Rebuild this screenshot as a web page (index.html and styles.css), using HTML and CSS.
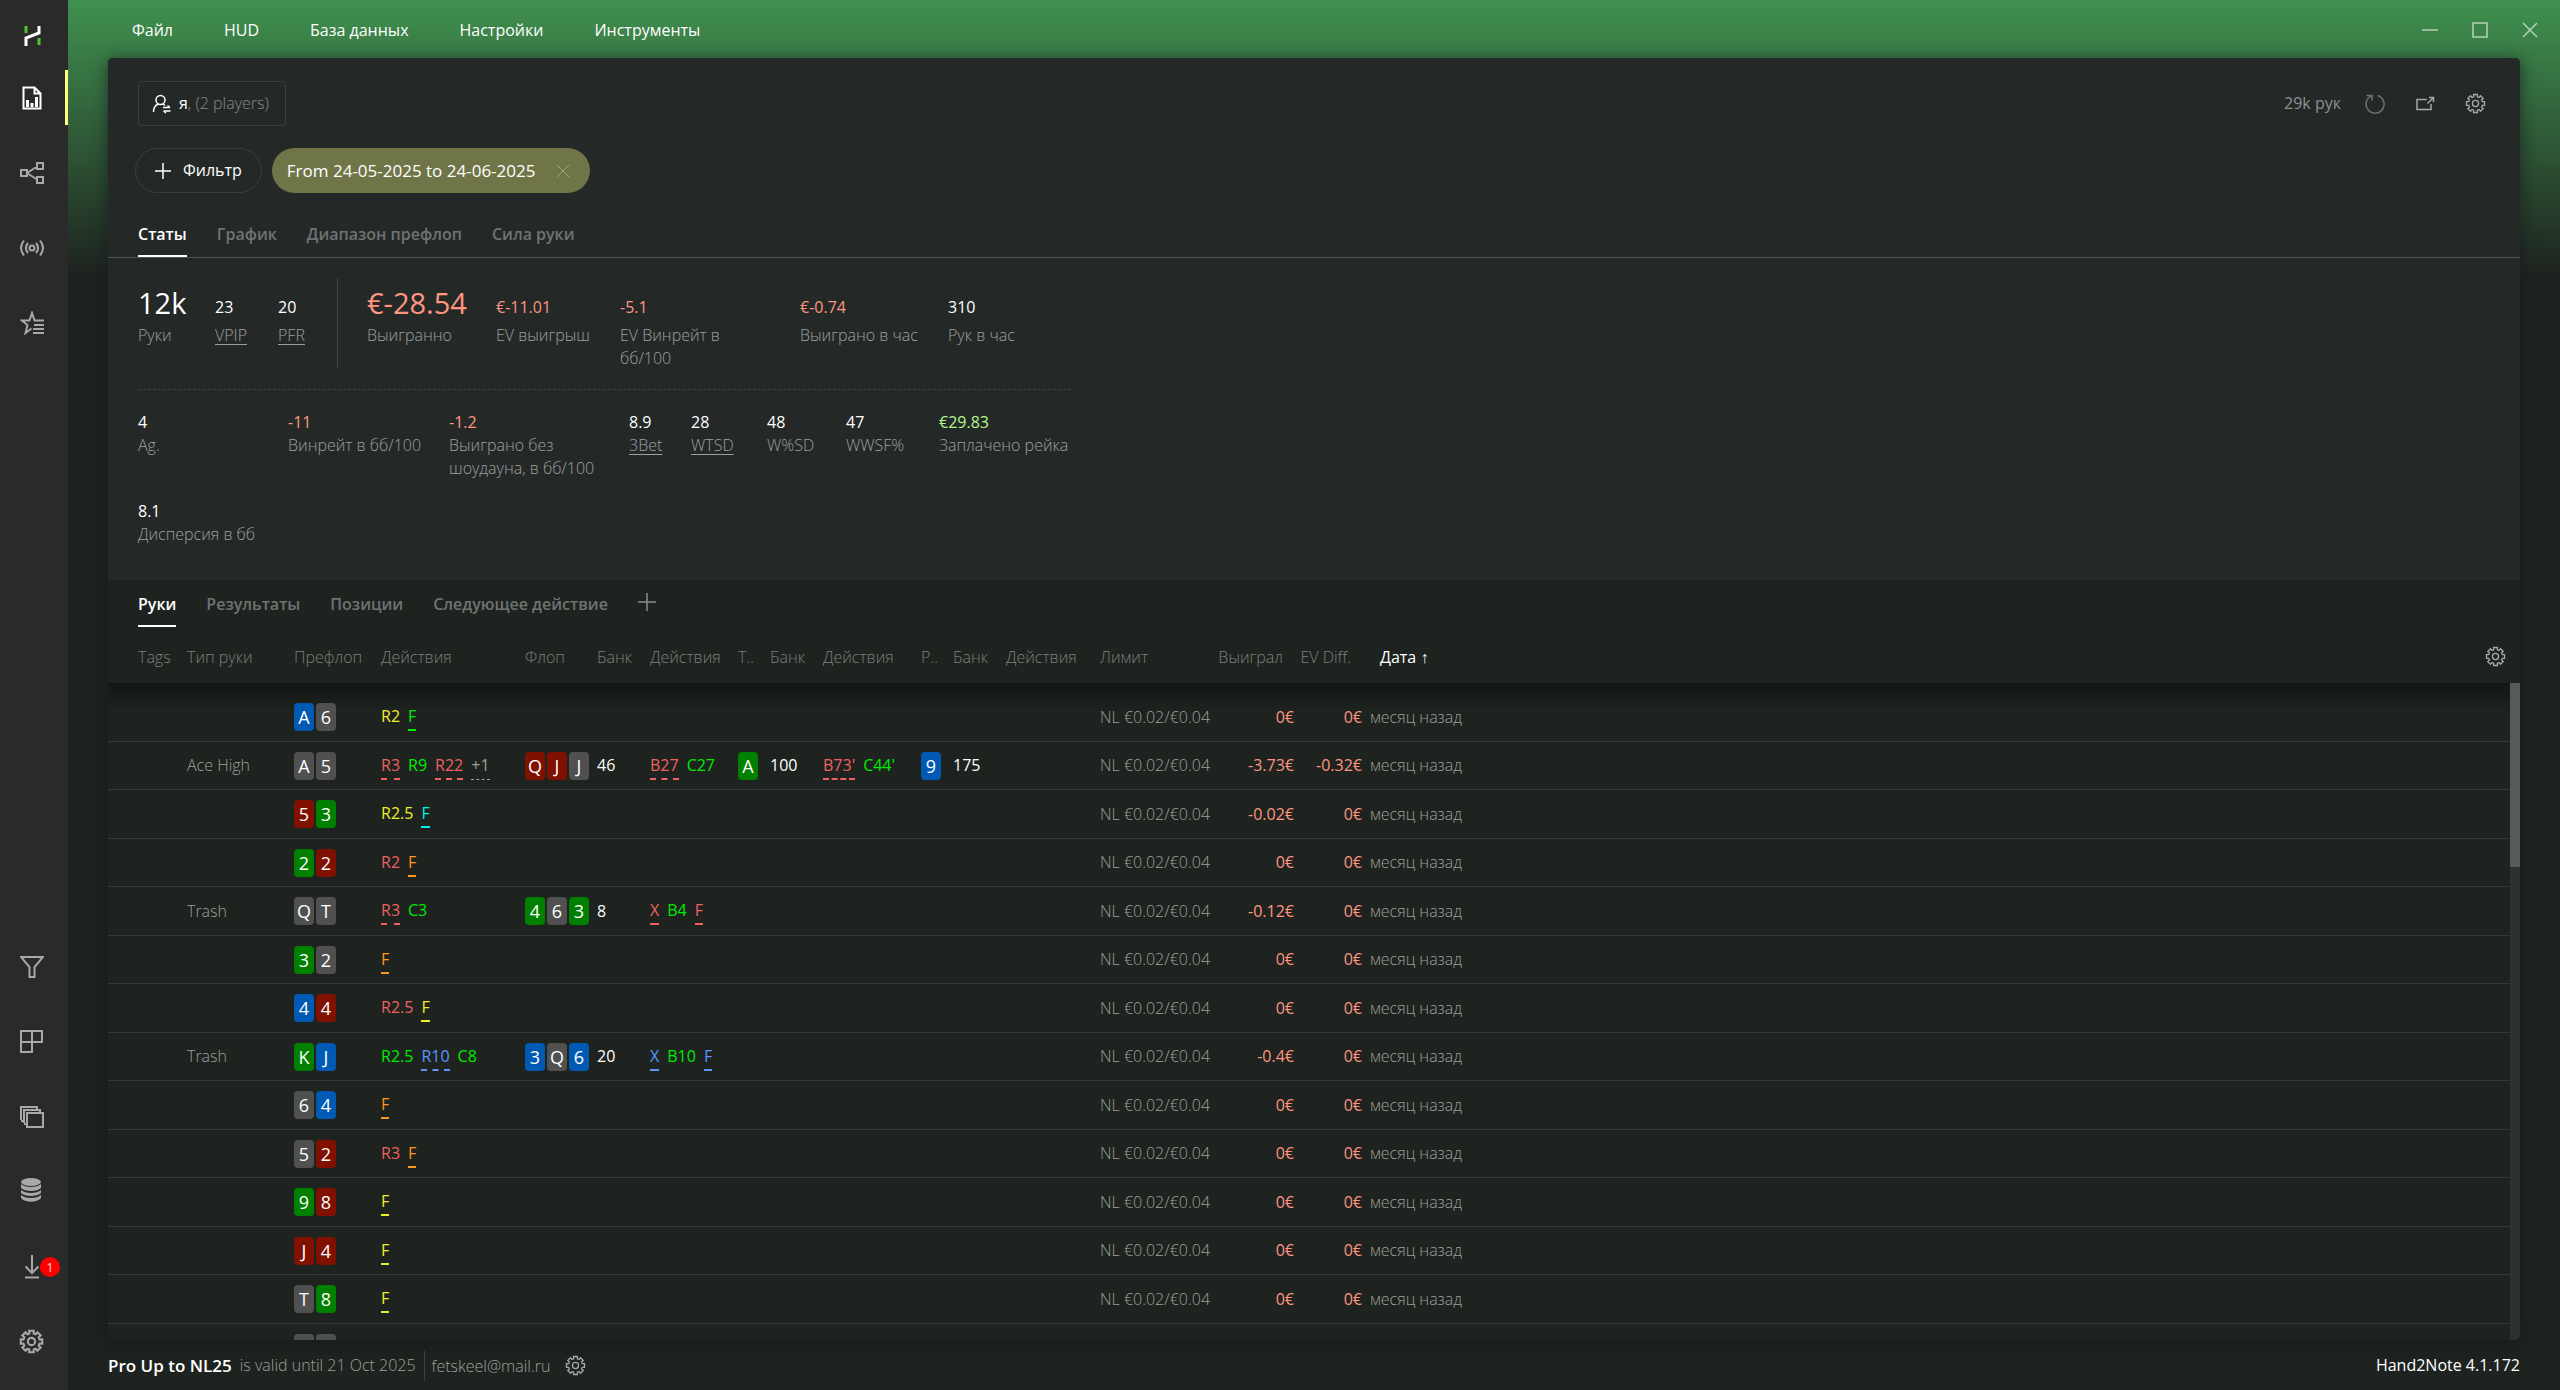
FILE: index.html
```html
<!DOCTYPE html>
<html lang="ru">
<head>
    <meta charset="UTF-8">
    <meta name="viewport" content="width=device-width, initial-scale=1.0">
    <title>Hand2Note</title>
    <link rel="stylesheet" href="styles.css">
</head>
<body>
    <svg class="sprite" aria-hidden="true">
        <symbol id="gear" viewBox="0 0 24 24">
            <path d="M9.800 1.700L14.200 1.700 14.100 4.300 16 5.100 17.700 3.200 20.800 6.300 18.900 8 19.700 9.900 22.300 9.800 22.300 14.200 19.700 14.100 18.900 16 20.800 17.700 17.700 20.800 16 18.900 14.100 19.700 14.200 22.300 9.800 22.300 9.900 19.700 8 18.900 6.300 20.800 3.200 17.700 5.100 16 4.300 14.100 1.700 14.200 1.700 9.800 4.300 9.900 5.100 8 3.200 6.300 6.300 3.200 8 5.100 9.900 4.300z"/>
            <circle cx="12" cy="12" r="3.500"/>
        </symbol>
    </svg>

    <nav class="sidebar">
        <div class="logo">
            <svg width="18" height="20" viewBox="0 0 18 20"><path class="logo-white" d="M16 0v7L3 12v8"/><path class="logo-green" d="M3 0v7M16 12v7"/></svg>
        </div>
        <button class="nav-btn active" aria-label="Отчёты">
            <svg width="20" height="24" viewBox="0 0 20 24"><path d="M1.500 1.500h11l6 6v15h-17z"/><path d="M12.500 1.500v6h6"/><path d="M5.500 21v-7M10 21v-4M14.500 21V11" stroke-width="3"/></svg>
        </button>
        <button class="nav-btn" aria-label="Дерево">
            <svg width="24" height="24" viewBox="0 0 24 24"><path d="M1 9h6v6H1zM17 2h6v6h-6zM17 16h6v6h-6zM7 12l10-6.500M7 12l10 6.500"/></svg>
        </button>
        <button class="nav-btn" aria-label="Live">
            <svg width="24" height="24" viewBox="0 0 24 24"><circle cx="12" cy="12" r="2.500"/><path d="M4 4.500c-4 5-4 10 0 15M8 7c-2.500 3-2.500 7 0 10M16 7c2.500 3 2.500 7 0 10M20 4.500c4 5 4 10 0 15"/></svg>
        </button>
        <button class="nav-btn" aria-label="Избранное">
            <svg width="24" height="24" viewBox="0 0 24 24"><path d="M24 9.500h-9.500L12 2 9.500 9.500H2L7.500 14l-2 8 6-4.500M14 14h10M13 18h11M13 22h11"/></svg>
        </button>
        <button class="nav-btn bottom" aria-label="Фильтры">
            <svg width="24" height="24" viewBox="0 0 24 24"><path d="M1 2h22l-8.500 10v10h-5V12z"/></svg>
        </button>
        <button class="nav-btn" aria-label="Панели">
            <svg width="24" height="24" viewBox="0 0 24 24"><path d="M1 1h21v11H12v10H1zM12 1v11M1 12h11"/></svg>
        </button>
        <button class="nav-btn" aria-label="Окна">
            <svg width="24" height="24" viewBox="0 0 24 24"><path d="M7 8h16v14H7zM4 18V5h16v3M7 19H4M1 15V2h16v3M4 16H1"/></svg>
        </button>
        <button class="nav-btn" aria-label="База">
            <svg class="solid" width="24" height="30" viewBox="0 0 24 30"><ellipse cx="11" cy="5" rx="10" ry="4"/><path d="M1 7c4 4 16 4 20 0v4c-4 4-16 4-20 0zM1 13c4 4 16 4 20 0v3c-4 4-16 4-20 0zM1 18c4 4 16 4 20 0v3c-4 5-16 5-20 0z"/></svg>
        </button>
        <button class="nav-btn" aria-label="Обновления">
            <svg width="24" height="24" viewBox="0 0 24 24"><path d="M12 0v18M5.500 11.500L12 18l6.500-6.500M5 22.500h14"/></svg>
            <span class="badge">1</span>
        </button>
        <button class="nav-btn" aria-label="Параметры">
            <svg width="25" height="25"><use href="#gear"/></svg>
        </button>
    </nav>

    <div class="window">
        <header class="titlebar">
            <button>Файл</button>
            <button>HUD</button>
            <button>База данных</button>
            <button>Настройки</button>
            <button>Инструменты</button>
            <div class="win-controls">
                <button aria-label="Свернуть"><svg width="16" height="16"><path d="M0 8h16"/></svg></button>
                <button aria-label="Развернуть"><svg width="16" height="16"><path d="M1 1h14v14H1z"/></svg></button>
                <button aria-label="Закрыть"><svg width="16" height="16"><path d="M1 1l14 14M15 1L1 15"/></svg></button>
            </div>
        </header>

        <main class="panel">
            <section class="report">
                <div class="top-row">
                    <button class="player">
                        <svg width="20" height="20" viewBox="0 0 20 20"><circle cx="8.500" cy="6" r="4.500"/><path d="M1.500 18c0-4 1.500-6.500 4.500-8M11 10l2 1.500M11 13.500h7M15.500 11.500l2.500 2M18.500 17h-7M14 19l-2.500-2"/></svg>
                        <span>я<span class="muted">, (2 players)</span></span>
                    </button>
                    <div class="top-tools">
                        <span>29k рук</span>
                        <button class="dim" aria-label="Обновить"><svg width="20" height="20" viewBox="0 0 20 20"><path d="M12.500 1.500a9 9 0 1 1-6 .4M1.500 1.500h5.500v5"/></svg></button>
                        <button aria-label="Открыть"><svg width="20" height="20" viewBox="0 0 20 20"><path d="M12 5.500H2v10h14V10"/><path d="M12.500 9.500L18 4M14 3.500h4.500V8"/></svg></button>
                        <button aria-label="Настройки отчёта"><svg width="21" height="21"><use href="#gear"/></svg></button>
                    </div>
                </div>
                <div class="filters">
                    <button class="add-filter"><svg width="16" height="16"><path d="M8 0v16M0 8h16"/></svg>Фильтр</button>
                    <button class="chip">From 24-05-2025 to 24-06-2025 <svg width="14" height="14"><path d="M1 1l12 12M13 1L1 13"/></svg></button>
                </div>
                <div class="tabs">
                    <button class="tab active">Статы</button>
                    <button class="tab">График</button>
                    <button class="tab">Диапазон префлоп</button>
                    <button class="tab">Сила руки</button>
                </div>

                <div class="stats">
                    <dl class="stat-row main-stats">
                        <div class="big"><dt>Руки</dt><dd>12k</dd></div>
                        <div><dt><a href="#">VPIP</a></dt><dd>23</dd></div>
                        <div><dt><a href="#">PFR</a></dt><dd>20</dd></div>
                        <div class="big split"><dt>Выигранно</dt><dd class="neg">€-28.54</dd></div>
                        <div><dt>EV выигрыш</dt><dd class="neg">€-11.01</dd></div>
                        <div><dt>EV Винрейт в<br>бб/100</dt><dd class="neg">-5.1</dd></div>
                        <div><dt>Выиграно в час</dt><dd class="neg">€-0.74</dd></div>
                        <div><dt>Рук в час</dt><dd>310</dd></div>
                    </dl>
                    <dl class="stat-row more-stats">
                        <div><dt>Ag.</dt><dd>4</dd></div>
                        <div><dt>Винрейт в бб/100</dt><dd class="neg">-11</dd></div>
                        <div><dt>Выиграно без<br>шоудауна, в бб/100</dt><dd class="neg">-1.2</dd></div>
                        <div><dt><a href="#">3Bet</a></dt><dd>8.9</dd></div>
                        <div><dt><a href="#">WTSD</a></dt><dd>28</dd></div>
                        <div><dt>W%SD</dt><dd>48</dd></div>
                        <div><dt>WWSF%</dt><dd>47</dd></div>
                        <div><dt>Заплачено рейка</dt><dd class="pos">€29.83</dd></div>
                        <div><dt>Дисперсия в бб</dt><dd>8.1</dd></div>
                    </dl>
                </div>
            </section>

            <section class="hands">
                <div class="tabs">
                    <button class="tab active">Руки</button>
                    <button class="tab">Результаты</button>
                    <button class="tab">Позиции</button>
                    <button class="tab">Следующее действие</button>
                    <button class="add-tab" aria-label="Добавить вкладку"><svg width="18" height="18"><path d="M9 0v18M0 9h18"/></svg></button>
                </div>
                <div class="table-area">
                    <table>
                        <colgroup>
                            <col class="c-tags"><col class="c-type"><col class="c-pre"><col class="c-act0">
                            <col class="c-flop"><col class="c-bank"><col class="c-act1">
                            <col class="c-card"><col class="c-bank"><col class="c-act2">
                            <col class="c-card"><col class="c-bank"><col class="c-act3">
                            <col class="c-limit"><col class="c-won"><col class="c-ev"><col>
                        </colgroup>
                        <thead>
                            <tr>
                                <th>Tags</th><th>Тип руки</th><th>Префлоп</th><th>Действия</th>
                                <th>Флоп</th><th>Банк</th><th>Действия</th>
                                <th>Т..</th><th>Банк</th><th>Действия</th>
                                <th>Р..</th><th>Банк</th><th>Действия</th>
                                <th>Лимит</th><th class="num">Выиграл</th><th class="num">EV Diff.</th>
                                <th class="sorted">
                                    <div class="date-head">Дата ↑
                                        <button aria-label="Настройки таблицы"><svg width="21" height="21"><use href="#gear"/></svg></button>
                                    </div>
                                </th>
                            </tr>
                        </thead>
                        <tbody id="hands"></tbody>
                    </table>
                    <div class="scrollbar"><div class="thumb"></div></div>
                </div>
            </section>
        </main>

        <footer class="statusbar">
            <b>Pro Up to NL25</b>
            <span class="valid">is valid until 21 Oct 2025</span>
            <span class="mail">fetskeel@mail.ru</span>
            <button aria-label="Аккаунт"><svg width="21" height="21"><use href="#gear"/></svg></button>
            <span class="version">Hand2Note 4.1.172</span>
        </footer>
    </div>

    <script src="script.js"></script>
</body>
</html>
```
FILE: styles.css
```css
* {
    box-sizing: border-box;
}

body {
    margin: 0;
    height: 100vh;
    display: flex;
    overflow: hidden;
    background: #1e231f linear-gradient(#40914f, #1e231f 275px) no-repeat;
    font-family: "Open Sans", "Noto Sans", sans-serif;
    font-size: 16px;
    line-height: 23px;
    color: #fff;
}

button {
    font: inherit;
    color: inherit;
    background: none;
    border: none;
    padding: 0;
    cursor: pointer;
}

svg {
    display: block;
    fill: none;
    stroke: currentColor;
    stroke-width: 1.5;
}

.sprite {
    position: absolute;
    width: 0;
    height: 0;
}

/* sidebar */
.sidebar {
    width: 68px;
    flex: none;
    display: flex;
    flex-direction: column;
    padding-bottom: 11px;
    background: #2a2a2a;
    color: #a8a8a8;
}

.logo {
    height: 60px;
    padding: 26px 4px 0 0;
    display: flex;
    justify-content: center;
}

.logo svg {
    stroke-width: 3;
}

.logo-white {
    stroke: #fff;
}

.logo-green {
    stroke: #4fc32b;
}

.nav-btn {
    position: relative;
    height: 75px;
    padding-right: 5px;
    display: flex;
    align-items: center;
    justify-content: center;
}

.nav-btn svg {
    stroke-width: 2;
}

.nav-btn.active {
    color: #fff;
}

.nav-btn.active::after {
    content: "";
    position: absolute;
    right: 0;
    top: 10px;
    width: 3px;
    height: 55px;
    background: #ffff80;
}

.nav-btn.bottom {
    margin-top: auto;
}

.nav-btn .solid {
    fill: currentColor;
    stroke: none;
}

.badge {
    position: absolute;
    left: 40px;
    top: 28px;
    width: 20px;
    height: 20px;
    border-radius: 50%;
    background: #f00;
    color: #fcc;
    font-size: 13px;
    line-height: 20px;
}

/* window */
.window {
    flex: 1;
    min-width: 0;
    display: flex;
    flex-direction: column;
}

.titlebar {
    height: 58px;
    flex: none;
    display: flex;
    align-items: center;
    gap: 51px;
    padding: 2px 22px 0 64px;
}

.win-controls {
    display: flex;
    gap: 34px;
    margin-left: auto;
    color: #b4d2ba;
}

.panel {
    flex: 1;
    min-height: 0;
    margin: 0 40px;
    display: flex;
    flex-direction: column;
    overflow: hidden;
    border-radius: 5px;
    background: #1e231f;
    box-shadow: 0 2px 16px rgba(20, 24, 32, 0.7);
}

.report {
    height: 522px;
    flex: none;
    padding-top: 23px;
    background: #242928;
}

.top-row,
.filters {
    display: flex;
    align-items: center;
    padding: 0 30px;
}

.player {
    display: flex;
    align-items: center;
    gap: 7px;
    height: 45px;
    padding: 0 16px 0 13px;
    border: 1px solid #3b403f;
    border-radius: 4px;
}

.muted {
    color: #858988;
    font-weight: 300;
}

.top-tools {
    display: flex;
    align-items: center;
    gap: 30px;
    margin-left: auto;
    padding-right: 4px;
    color: #a5a8a7;
}

.top-tools span {
    margin-right: -6px;
    color: #8d908f;
}

.top-tools .dim {
    color: #6c706f;
}

.filters {
    gap: 10px;
    margin-top: 22px;
    padding-left: 27px;
}

.add-filter,
.chip {
    display: flex;
    align-items: center;
    height: 45px;
    border-radius: 23px;
}

.add-filter {
    gap: 12px;
    padding: 0 19px;
    border: 1px solid #3b403f;
}

.chip {
    gap: 21px;
    padding: 0 20px 0 15px;
    background: #6f7547;
    font-size: 17px;
}

.chip svg {
    color: #a0a47c;
    stroke-width: 1;
}

.tabs {
    display: flex;
    gap: 30px;
    padding: 0 30px;
}

.tab {
    padding-bottom: 9px;
    border-bottom: 2px solid transparent;
    font-weight: 600;
    color: #6f7372;
}

.tab.active {
    color: #fff;
    border-color: #fff;
}

.report .tabs {
    margin-top: 30px;
    border-bottom: 1px solid #4d5350;
}

/* stats */
.stats {
    width: max-content;
    padding: 20px 30px;
}

.stat-row {
    display: grid;
    margin: 0;
}

.stat-row > div {
    display: flex;
    flex-direction: column-reverse;
    justify-content: flex-end;
    white-space: nowrap;
}

.main-stats {
    grid-template-columns: 77px 63px 89px 129px 124px 180px 148px 122px;
    height: 112px;
    border-bottom: 1px dashed #3d4341;
}

.more-stats {
    grid-template-columns: 150px 161px 180px 62px 76px 79px 93px 132px;
    padding-top: 21px;
    row-gap: 20px;
}

dt {
    color: #9da09f;
    font-weight: 300;
}

dt a {
    color: inherit;
    text-underline-offset: 3px;
}

dd {
    margin: 0;
}

.main-stats dd {
    height: 46px;
    padding-top: 18px;
}

.main-stats .big dd {
    padding-top: 13px;
    font-size: 29px;
}

.main-stats .split {
    position: relative;
}

.main-stats .split::before {
    content: "";
    position: absolute;
    left: -30px;
    top: 0;
    width: 1px;
    height: 90px;
    background: #3d4341;
}

.neg {
    color: #ff9580;
}

.pos {
    color: #b4f58c;
}

/* hands */
.hands {
    flex: 1;
    min-height: 0;
    display: flex;
    flex-direction: column;
}

.hands .tabs {
    padding-top: 13px;
}

.add-tab {
    height: 18px;
    color: #8b8e8c;
}

.table-area {
    flex: 1;
    min-height: 0;
    display: flex;
    overflow: hidden;
}

table {
    flex: 1;
    align-self: flex-start;
    table-layout: fixed;
    border-collapse: separate;
    border-spacing: 0;
}

.c-tags { width: 79px; }
.c-type { width: 107px; }
.c-pre { width: 87px; }
.c-act0 { width: 144px; }
.c-flop { width: 72px; }
.c-bank { width: 53px; }
.c-act1 { width: 88px; }
.c-card { width: 32px; }
.c-act2 { width: 98px; }
.c-act3 { width: 94px; }
.c-limit { width: 114px; }
.c-won { width: 80px; }
.c-ev { width: 68px; }

th,
td {
    padding: 0;
    text-align: left;
    white-space: nowrap;
    font-weight: 300;
}

th {
    height: 56px;
    padding-top: 4px;
    color: #7c807d;
}

th:first-child {
    padding-left: 30px;
}

th.num {
    padding-right: 11px;
}

th.sorted {
    padding-left: 18px;
    color: #fff;
    font-weight: 400;
}

.date-head {
    display: flex;
    align-items: flex-start;
    justify-content: space-between;
    padding-right: 4px;
}

.date-head button {
    color: #a5a8a5;
}

td {
    height: 48px;
    border-bottom: 1px solid #333a36;
    color: #9da09c;
}

tr:nth-child(odd) td {
    height: 49px;
}

tbody tr:first-child td {
    height: 59px;
    padding-top: 10px;
    background: linear-gradient(#131713, transparent 28px);
}

.num {
    text-align: right;
}

td.neg {
    color: #ff9580;
    font-weight: 400;
}

td.bank {
    color: #fff;
    font-weight: 400;
}

td.date {
    padding-left: 8px;
}

.cards {
    display: flex;
    gap: 2px;
}

.card {
    width: 20px;
    height: 28px;
    border-radius: 4px;
    color: #fff;
    font-size: 18px;
    font-weight: 400;
    line-height: 29px;
    text-align: center;
}

.card.s { background: #505050; }
.card.h { background: #801000; }
.card.d { background: #005ab4; }
.card.c { background: #008000; }

.actions {
    display: flex;
    gap: 8px;
    font-weight: 400;
}

.act {
    height: 28px;
    padding-top: 2px;
    border-bottom: 2px none;
}

.act.solid { border-bottom-style: solid; }
.act.dash { border-bottom-style: dashed; }
.act.more { border-bottom: 1px dashed; }

.red { color: #f06060; }
.green { color: #00eb00; }
.yellow { color: #f0f028; }
.orange { color: #ff961e; }
.cyan { color: #00f0f0; }
.blue { color: #5a96ff; }

.scrollbar {
    width: 10px;
    margin-top: 56px;
    background: #2d322e;
}

.thumb {
    height: 28%;
    background: #565b57;
}

/* status bar */
.statusbar {
    height: 50px;
    flex: none;
    display: flex;
    align-items: center;
    padding: 1px 40px 0;
    color: #9da09c;
    font-weight: 300;
}

.statusbar b {
    color: #fff;
    font-size: 17px;
    font-weight: 600;
}

.valid {
    margin: 0 8px;
}

.mail {
    padding-left: 7px;
    border-left: 1px solid #3d4341;
    line-height: 30px;
}

.statusbar button {
    margin-left: 15px;
    color: #a5a8a5;
}

.version {
    margin-left: auto;
    color: #fff;
    font-weight: 400;
}
```
FILE: script.js
```js
// card: rank + suit (s, h, d, c)
// action: [text, color, underline]
const hands = [
    { pre: 'Ad 6s', actions: [['R2', 'yellow'], ['F', 'green', 'solid']] },
    {
        type: 'Ace High', pre: 'As 5s',
        actions: [['R3', 'red', 'dash'], ['R9', 'green'], ['R22', 'red', 'dash'], ['+1', '', 'more']],
        flop: 'Qh Jh Js', flopBank: 46, flopActions: [['B27', 'red', 'dash'], ['C27', 'green']],
        turn: 'Ac', turnBank: 100, turnActions: [["B73'", 'red', 'dash'], ["C44'", 'green']],
        river: '9d', riverBank: 175,
        won: '-3.73€', ev: '-0.32€'
    },
    { pre: '5h 3c', actions: [['R2.5', 'yellow'], ['F', 'cyan', 'solid']], won: '-0.02€' },
    { pre: '2c 2h', actions: [['R2', 'red'], ['F', 'orange', 'solid']] },
    {
        type: 'Trash', pre: 'Qs Ts', actions: [['R3', 'red', 'dash'], ['C3', 'green']],
        flop: '4c 6s 3c', flopBank: 8,
        flopActions: [['X', 'red', 'solid'], ['B4', 'green'], ['F', 'red', 'solid']],
        won: '-0.12€'
    },
    { pre: '3c 2s', actions: [['F', 'orange', 'solid']] },
    { pre: '4d 4h', actions: [['R2.5', 'red'], ['F', 'yellow', 'solid']] },
    {
        type: 'Trash', pre: 'Kc Jd', actions: [['R2.5', 'green'], ['R10', 'blue', 'dash'], ['C8', 'green']],
        flop: '3d Qs 6d', flopBank: 20,
        flopActions: [['X', 'blue', 'solid'], ['B10', 'green'], ['F', 'blue', 'solid']],
        won: '-0.4€'
    },
    { pre: '6s 4d', actions: [['F', 'orange', 'solid']] },
    { pre: '5s 2h', actions: [['R3', 'red'], ['F', 'orange', 'solid']] },
    { pre: '9c 8h', actions: [['F', 'yellow', 'solid']] },
    { pre: 'Jh 4h', actions: [['F', 'yellow', 'solid']] },
    { pre: 'Ts 8c', actions: [['F', 'yellow', 'solid']] }
];

function cards(str) {
    if (!str) return '';
    const list = str.split(' ').map(c => `<span class="card ${c[1]}">${c[0]}</span>`);
    return `<div class="cards">${list.join('')}</div>`;
}

function actions(list) {
    if (!list) return '';
    const items = list.map(([text, color, line]) => `<span class="act ${color} ${line || ''}">${text}</span>`);
    return `<div class="actions">${items.join('')}</div>`;
}

const rows = hands.map(h => `
    <tr>
        <td></td>
        <td>${h.type || ''}</td>
        <td>${cards(h.pre)}</td>
        <td>${actions(h.actions)}</td>
        <td>${cards(h.flop)}</td>
        <td class="bank">${h.flopBank || ''}</td>
        <td>${actions(h.flopActions)}</td>
        <td>${cards(h.turn)}</td>
        <td class="bank">${h.turnBank || ''}</td>
        <td>${actions(h.turnActions)}</td>
        <td>${cards(h.river)}</td>
        <td class="bank">${h.riverBank || ''}</td>
        <td></td>
        <td>NL €0.02/€0.04</td>
        <td class="num neg">${h.won || '0€'}</td>
        <td class="num neg">${h.ev || '0€'}</td>
        <td class="date">месяц назад</td>
    </tr>`);

rows.push(`
    <tr>
        <td colspan="2"></td>
        <td><div class="cards"><span class="card s"></span><span class="card s"></span></div></td>
        <td colspan="14"></td>
    </tr>`);

document.getElementById('hands').innerHTML = rows.join('');
```
